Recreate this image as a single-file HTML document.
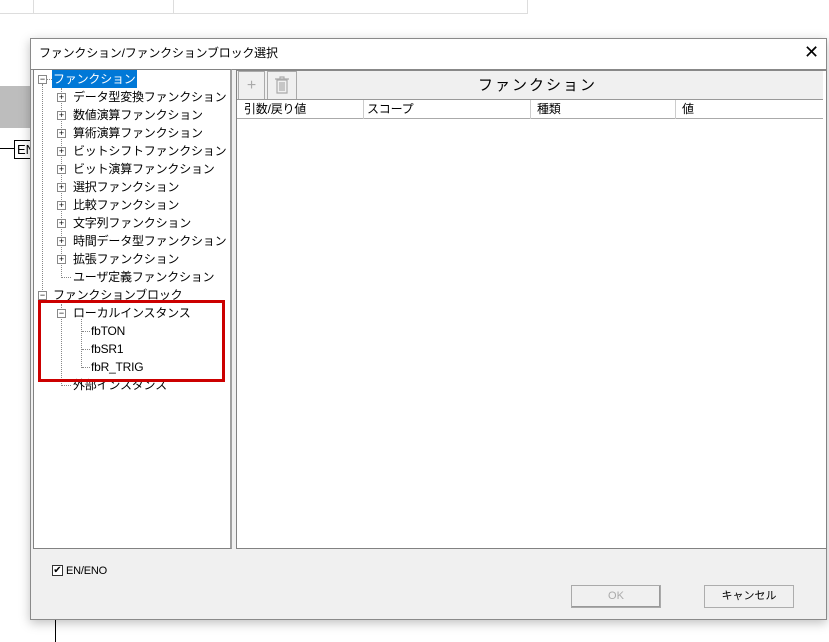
<!DOCTYPE html>
<html><head><meta charset="utf-8"><style>
*{margin:0;padding:0;box-sizing:border-box}
body{width:829px;height:642px;background:#fff;position:relative;overflow:hidden;font-family:"Liberation Sans","Noto Sans CJK JP",sans-serif;font-size:12px;color:#000}
.a{position:absolute}
.t{position:absolute;white-space:nowrap;font-size:12px;line-height:16px;letter-spacing:-0.2px}
.pm{position:absolute;width:9px;height:9px;border:1px solid #888;background:#fff;font-size:9px;line-height:7px;text-align:center;color:#000}
.dv{position:absolute;border-left:1px dotted #888}
.dh{position:absolute;border-top:1px dotted #888;height:0}
</style></head><body>
<div class="a" style="left:33px;top:0;width:1px;height:13px;background:#ddd"></div>
<div class="a" style="left:173px;top:0;width:1px;height:13px;background:#ddd"></div>
<div class="a" style="left:527px;top:0;width:1px;height:13px;background:#ddd"></div>
<div class="a" style="left:0;top:13px;width:528px;height:1px;background:#ddd"></div>
<div class="a" style="left:0;top:86px;width:31px;height:42px;background:#bdbdbd"></div>
<div class="a" style="left:0;top:148px;width:15px;height:1px;background:#000"></div>
<div class="a" style="left:14px;top:140px;width:18px;height:19px;border:1px solid #000;background:#fff;font-size:13px;line-height:17px;padding-left:2px">EN</div>
<div class="a" style="left:55px;top:619px;width:1px;height:23px;background:#000"></div>

<div class="a" style="left:30px;top:38px;width:797px;height:582px;background:#f0f0f0;border:1px solid #8a8a8a;box-shadow:0 3px 10px rgba(0,0,0,.25)">
 <div class="a" style="left:0;top:0;width:795px;height:30px;background:#fff"></div>
 <div class="t" style="left:8px;top:6px;font-size:12px">ファンクション/ファンクションブロック選択</div>
 <div class="t" style="left:773px;top:3px;font-size:18px;line-height:20px;font-weight:300">✕</div>
 <div class="a" style="left:0;top:30px;width:795px;height:1px;background:#888"></div>
</div>

<!-- tree -->
<div class="a" style="left:33px;top:69px;width:199px;height:480px;background:#fff;border:1px solid #828282;border-right:2px solid #a0a0a0"></div>
<div class="pm" style="left:38px;top:75px">−</div>
<div class="dv" style="left:42px;top:84px;height:212px"></div>
<div class="dv" style="left:61px;top:88px;height:190px"></div>
<div class="dh" style="left:47px;top:79px;width:5px"></div>
<div class="t" style="left:52px;top:70px;color:#fff;background:#0078d7;padding:1px 1px">ファンクション</div>
<div class="pm" style="left:57px;top:93px">+</div><div class="t" style="left:73px;top:89px">データ型変換ファンクション</div>
<div class="pm" style="left:57px;top:111px">+</div><div class="t" style="left:73px;top:107px">数値演算ファンクション</div>
<div class="pm" style="left:57px;top:129px">+</div><div class="t" style="left:73px;top:125px">算術演算ファンクション</div>
<div class="pm" style="left:57px;top:147px">+</div><div class="t" style="left:73px;top:143px">ビットシフトファンクション</div>
<div class="pm" style="left:57px;top:165px">+</div><div class="t" style="left:73px;top:161px">ビット演算ファンクション</div>
<div class="pm" style="left:57px;top:183px">+</div><div class="t" style="left:73px;top:179px">選択ファンクション</div>
<div class="pm" style="left:57px;top:201px">+</div><div class="t" style="left:73px;top:197px">比較ファンクション</div>
<div class="pm" style="left:57px;top:219px">+</div><div class="t" style="left:73px;top:215px">文字列ファンクション</div>
<div class="pm" style="left:57px;top:237px">+</div><div class="t" style="left:73px;top:233px">時間データ型ファンクション</div>
<div class="pm" style="left:57px;top:255px">+</div><div class="t" style="left:73px;top:251px">拡張ファンクション</div>
<div class="dh" style="left:62px;top:277px;width:9px"></div><div class="t" style="left:73px;top:269px">ユーザ定義ファンクション</div>
<div class="pm" style="left:38px;top:291px">−</div><div class="t" style="left:53px;top:287px">ファンクションブロック</div>
<div class="dv" style="left:61px;top:304px;height:82px"></div>
<div class="pm" style="left:57px;top:309px">−</div><div class="t" style="left:73px;top:305px">ローカルインスタンス</div>
<div class="dv" style="left:81px;top:319px;height:49px"></div>
<div class="dh" style="left:82px;top:331px;width:8px"></div><div class="t" style="left:91px;top:323px">fbTON</div>
<div class="dh" style="left:82px;top:349px;width:8px"></div><div class="t" style="left:91px;top:341px">fbSR1</div>
<div class="dh" style="left:82px;top:367px;width:8px"></div><div class="t" style="left:91px;top:359px">fbR_TRIG</div>
<div class="dh" style="left:62px;top:385px;width:9px"></div><div class="t" style="left:73px;top:377px">外部インスタンス</div>
<div class="a" style="left:38px;top:300px;width:187px;height:82px;border:3px solid #cc0000"></div>

<!-- right panel -->
<div class="a" style="left:236px;top:69px;width:591px;height:480px;background:#fff;border:1px solid #828282;border-top:2px solid #888"></div>
<div class="a" style="left:237px;top:71px;width:586px;height:29px;background:#f0f0f0"></div>
<div class="a" style="left:238px;top:71px;width:27px;height:29px;border:1px solid #aaa;background:#f0f0f0;color:#aaa;font-size:16px;text-align:center;line-height:28px">+</div>
<div class="a" style="left:267px;top:71px;width:30px;height:29px;border:1px solid #aaa;background:#f0f0f0"></div>
<svg class="a" style="left:274px;top:76px" width="16" height="18" viewBox="0 0 16 18"><g fill="none" stroke="#aaa" stroke-width="1.2"><path d="M1 3h14M6 3V1h4v2M3 4h10v13H3z"/><path d="M6 6v9M8 6v9M10 6v9"/></g></svg>
<div class="t" style="left:478px;top:77px;font-size:15px;line-height:18px;letter-spacing:2px">ファンクション</div>
<div class="a" style="left:237px;top:99px;width:586px;height:1px;background:#999"></div>
<div class="a" style="left:237px;top:100px;width:586px;height:19px;background:#fff;border-bottom:1px solid #aaa"></div>
<div class="a" style="left:363px;top:100px;width:1px;height:19px;background:#ccc"></div>
<div class="a" style="left:530px;top:100px;width:1px;height:19px;background:#ccc"></div>
<div class="a" style="left:675px;top:100px;width:1px;height:19px;background:#ccc"></div>
<div class="t" style="left:244px;top:101px">引数/戻り値</div>
<div class="t" style="left:367px;top:101px">スコープ</div>
<div class="t" style="left:537px;top:101px">種類</div>
<div class="t" style="left:682px;top:101px">値</div>

<!-- bottom -->
<div class="a" style="left:52px;top:565px;width:11px;height:11px;border:1px solid #333;background:#fff;font-size:10px;line-height:9px;text-align:center">✔</div>
<div class="t" style="left:66px;top:563px;font-size:11px">EN/ENO</div>
<div class="a" style="left:571px;top:585px;width:90px;height:23px;border:1px solid #aaa;box-shadow:inset -1px -1px 0 #999;background:#f0f0f0;color:#aaa;text-align:center;line-height:21px;font-size:11px">OK</div>
<div class="a" style="left:704px;top:585px;width:90px;height:23px;border:1px solid #adadad;background:#f0f0f0;text-align:center;line-height:21px;font-size:11px">キャンセル</div>
</body></html>
